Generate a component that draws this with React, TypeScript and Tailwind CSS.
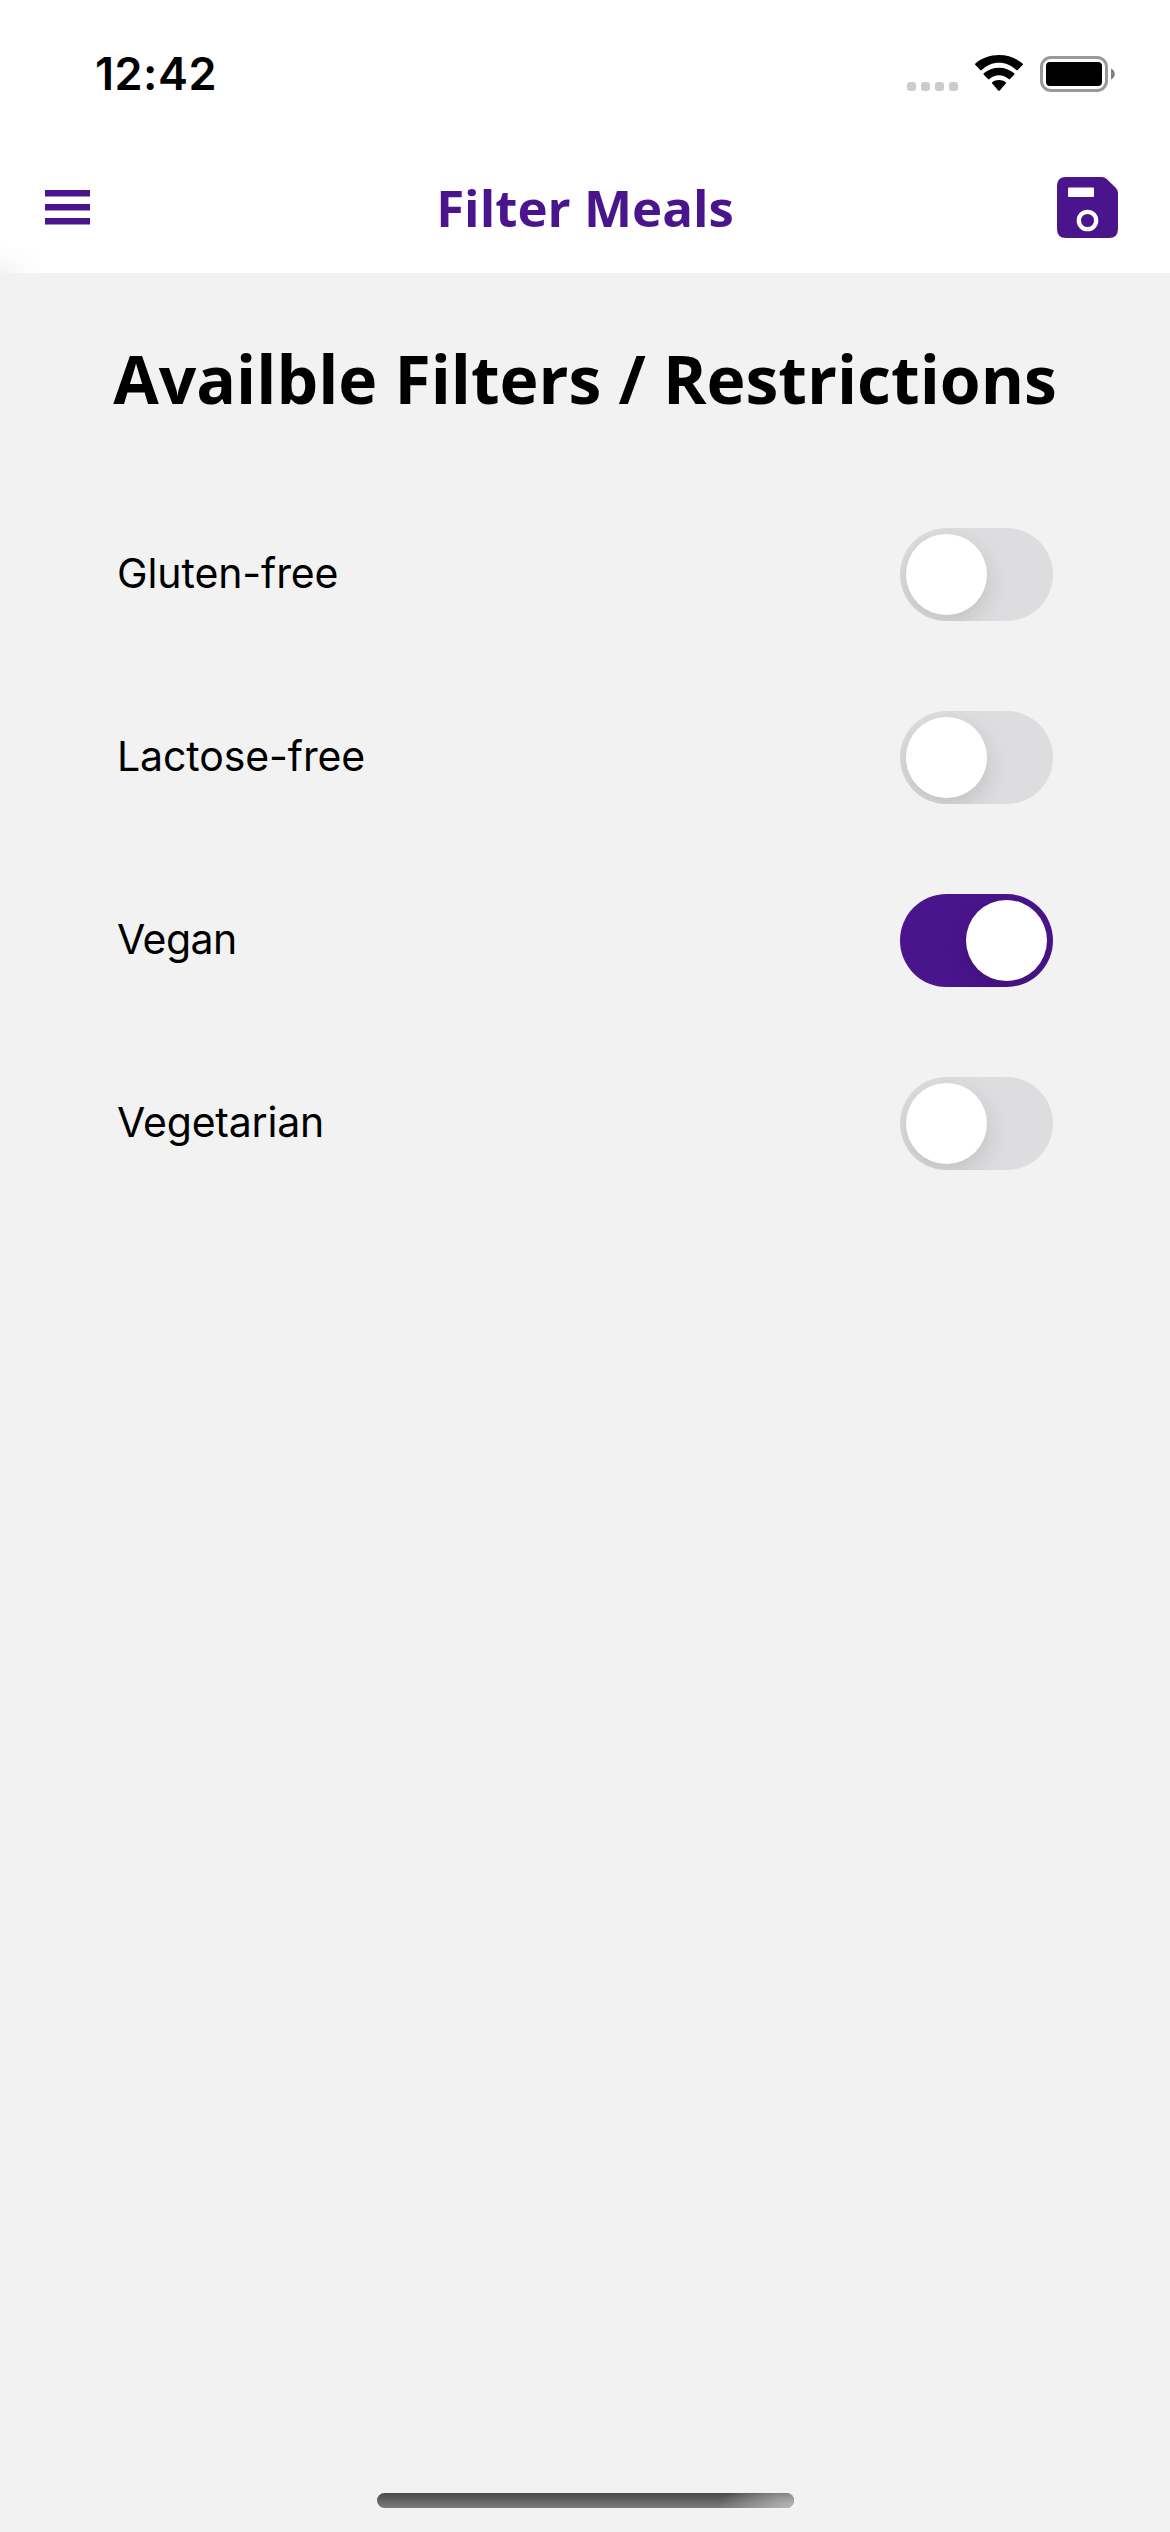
import React, { useState } from "react";

const PURPLE = "#4a148c";

function StatusBar() {
  return (
    <div className="flex h-[141px] items-start justify-between pl-[95px] pr-[54px]">
      <span className="mt-[47px] font-['Inter',sans-serif] text-[45px] leading-[54px] font-semibold tracking-[0.5px] text-black">
        12:42
      </span>
      <div className="mt-[54px] flex items-start">
        <div className="mt-[28px] flex gap-[5px]">
          {[0, 1, 2, 3].map((i) => (
            <span key={i} className="size-[9px] rounded-[3px] bg-[#cccccc]" />
          ))}
        </div>
        <svg className="ml-[17px]" width="48" height="38" viewBox="0 0 48 38" fill="#000">
          <path d="M24 8.700c6.600 0 12.700 2.700 17.300 7.300.4.400 1 .4 1.400 0l4.900-4.900c.5-.5.5-1.100 0-1.600C41.300 4.200 33 1.100 24 1.100S6.700 4.200.4 9.500c-.5.5-.5 1.100 0 1.600L5.300 16c.4.400 1 .4 1.400 0C11.300 11.400 17.400 8.700 24 8.700z" />
          <path d="M24 21.300c3.600 0 7 1.400 9.600 3.800.4.400 1 .4 1.300 0l4.300-4.300c.5-.5.5-1.100 0-1.600C35.100 15.700 29.800 13.700 24 13.700s-11.100 2-15.200 5.500c-.5.5-.5 1.100 0 1.600l4.300 4.300c.3.400.9.4 1.300 0C17 22.700 20.400 21.300 24 21.300z" />
          <path d="M30.800 29.600c.4-.4.4-1 0-1.400C28.900 26.900 26.600 26.100 24 26.100s-4.900.8-6.800 2.100c-.4.400-.4 1 0 1.400l6 6.800c.5.500 1.100.5 1.600 0z" />
        </svg>
        <svg className="ml-[16px]" width="77" height="38" viewBox="0 0 77 38">
          <rect x="2.500" y="3.500" width="65" height="33" rx="9.500" fill="none" stroke="#999" strokeWidth="3" />
          <rect x="7" y="8" width="56" height="24" rx="4" fill="#000" />
          <path d="M72 14.500v11c5-2 5-9 0-11z" fill="#808080" />
        </svg>
      </div>
    </div>
  );
}

function MenuIcon() {
  return (
    <svg width="46" height="36" viewBox="0 0 46 36" fill={PURPLE}>
      <path d="M0 1h45v6.400H0zM0 15h45v6.400H0zM0 29h45v6.400H0z" />
    </svg>
  );
}

function SaveIcon() {
  return (
    <svg width="61" height="61" viewBox="0 0 61 61">
      <path
        d="M9 0H44.500Q47.500 0 49.700 2L58.500 10.500Q61 13 61 16V52Q61 61 52 61H9Q0 61 0 52V9Q0 0 9 0Z"
        fill={PURPLE}
      />
      <rect x="11" y="10.500" width="26" height="9.500" rx="1" fill="#fff" />
      <circle cx="30.500" cy="43.500" r="8.700" fill="none" stroke="#fff" strokeWidth="4.300" />
    </svg>
  );
}

function Header() {
  return (
    <header className="bg-white">
      <StatusBar />
      <div className="relative flex h-[132px] items-center justify-between pr-[52px] pl-[45px]">
        <div className="absolute bottom-0 left-0 h-[26px] w-[40px] bg-[radial-gradient(ellipse_at_bottom_left,#f5f5f5_0%,#fcfcfc_50%,#ffffff_90%)]" />
        <button aria-label="Menu" className="relative">
          <MenuIcon />
        </button>
        <h1 className="absolute inset-x-0 top-[31px] text-center font-['Open_Sans',sans-serif] text-[51px] leading-[70px] font-bold text-[#4a148c]">
          Filter Meals
        </h1>
        <button aria-label="Save" className="relative">
          <SaveIcon />
        </button>
      </div>
    </header>
  );
}

type FilterProps = { label: string; initial: boolean; tracking: string };

function FilterSwitch({ label, initial, tracking }: FilterProps) {
  const [on, setOn] = useState(initial);
  return (
    <div className="flex h-[93px] items-center justify-between">
      <span className={`mb-[3px] font-['Inter',sans-serif] text-[41px] leading-[50px] text-black ${tracking}`}>
        {label}
      </span>
      <button
        role="switch"
        aria-checked={on}
        aria-label={label}
        onClick={() => setOn(!on)}
        className={
          on
            ? "flex h-[93px] w-[153px] justify-end overflow-hidden rounded-full bg-[#4a148c] p-[6px]"
            : "flex h-[93px] w-[153px] justify-start overflow-hidden rounded-full bg-[#dddddf] p-[6px]"
        }
      >
        <span className="size-[81px] rounded-full bg-white shadow-[0_9px_24px_rgba(0,0,0,0.13)]" />
      </button>
    </div>
  );
}

export default function App() {
  return (
    <div className="flex h-[2532px] w-[1170px] flex-col overflow-hidden bg-[#f2f2f2]">
      <Header />
      <main className="flex flex-1 flex-col items-center">
        <h2 className="mt-[60px] text-center font-['Open_Sans',sans-serif] text-[66px] leading-[90px] font-bold whitespace-nowrap text-black">
          Availble Filters / Restrictions
        </h2>
        <div className="mt-[105px] flex w-[936px] flex-col gap-[90px]">
          <FilterSwitch label="Gluten-free" initial={false} tracking="tracking-[-0.1px]" />
          <FilterSwitch label="Lactose-free" initial={false} tracking="tracking-[-0.1px]" />
          <FilterSwitch label="Vegan" initial={true} tracking="tracking-[-0.6px]" />
          <FilterSwitch label="Vegetarian" initial={false} tracking="tracking-[-0.2px]" />
        </div>
      </main>
      <div className="mb-[24px] flex justify-center">
        <div className="h-[15px] w-[417px] overflow-hidden rounded-full bg-[linear-gradient(to_bottom,#4a4a4a,#7b7b7b)]">
          <div className="ml-auto h-full w-[75px] bg-[radial-gradient(75px_32px_at_bottom_right,#b8b8b8_0%,transparent_100%)]" />
        </div>
      </div>
    </div>
  );
}
